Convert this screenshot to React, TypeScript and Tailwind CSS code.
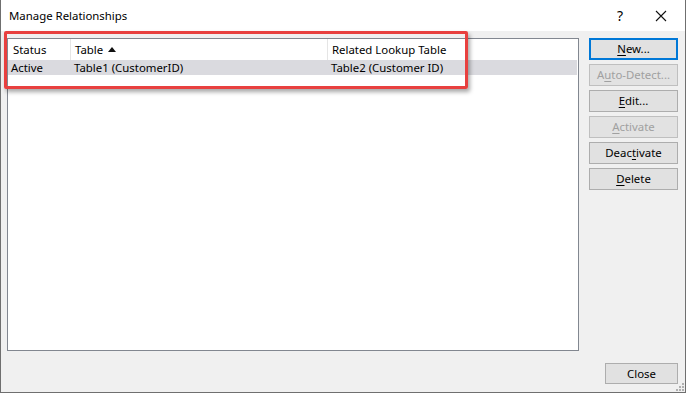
const FONT = "font-['Noto_Sans','Liberation_Sans',sans-serif]";

type Btn = { pre: string; key: string; post: string; disabled?: boolean; focused?: boolean };

const BUTTONS: Btn[] = [
  { pre: "", key: "N", post: "ew...", focused: true },
  { pre: "A", key: "u", post: "to-Detect...", disabled: true },
  { pre: "", key: "E", post: "dit..." },
  { pre: "", key: "A", post: "ctivate", disabled: true },
  { pre: "Deac", key: "t", post: "ivate" },
  { pre: "", key: "D", post: "elete" },
];

function DialogButton({ b }: { b: Btn }) {
  const border = b.focused
    ? "border-2 border-[#0078d7]"
    : b.disabled
      ? "border border-[#bfbfbf]"
      : "border border-[#adadad]";
  return (
    <button
      className={`w-[89px] h-[22px] flex items-center justify-center text-[11.4px] leading-none ${border} ${
        b.disabled ? "bg-[#cccccc]/40 text-[#a0a0a0]" : "bg-[#e1e1e1] text-black"
      }`}
    >
      {b.pre}
      <span className="underline underline-offset-2">{b.key}</span>
      {b.post}
    </button>
  );
}

export default function App() {
  return (
    <div
      className={`${FONT} w-[686px] h-[393px] bg-[#f0f0f0] border-l border-r border-b border-[#6f6f6f] flex flex-col relative overflow-hidden text-black`}
    >
      {/* title bar */}
      <div className="h-[31px] bg-white flex items-center shrink-0">
        <span className="pl-[8px] text-[11.4px] flex-1">Manage Relationships</span>
        <span className="text-[14px] w-[20px] text-center mr-[25px]">?</span>
        <svg width="12" height="12" viewBox="0 0 12 12" className="mr-[18px]">
          <path d="M1 1 L11 11 M11 1 L1 11" stroke="#111" strokeWidth="1.1" />
        </svg>
      </div>

      {/* body */}
      <div className="flex flex-1 pl-[6px] pt-[7px]">
        <div className="w-[572px] h-[313px] bg-white border border-[#828790] flex flex-col text-[11.4px]">
          <div className="h-[21px] flex items-stretch">
            <div className="w-[63px] flex items-center pl-[5px] border-r border-[#e5e5e5]">Status</div>
            <div className="w-[257px] flex items-center pl-[4px] gap-[5px] border-r border-[#e5e5e5]">
              Table
              <svg width="8" height="5" viewBox="0 0 8 5">
                <path d="M0 5 L4 0 L8 5 Z" fill="#111" />
              </svg>
            </div>
            <div className="flex items-center pl-[4px] flex-1">Related Lookup Table</div>
          </div>
          <div className="h-[15px] mr-[1px] bg-[#dadadf] flex items-center">
            <div className="w-[63px] pl-[3px]">Active</div>
            <div className="w-[257px] pl-[3px]">Table1 (CustomerID)</div>
            <div className="pl-[3px]">Table2 (Customer ID)</div>
          </div>
        </div>

        <div className="ml-[10px] flex flex-col gap-[4px]">
          {BUTTONS.map((b) => (
            <DialogButton key={b.pre + b.key + b.post} b={b} />
          ))}
        </div>
      </div>

      <div className="flex justify-end pr-[7px] pb-[8px]">
        <button className="w-[73px] h-[21px] border border-[#adadad] bg-[#e1e1e1] text-[11.4px] leading-none">
          Close
        </button>
      </div>

      {/* size grip */}
      <svg width="8" height="8" viewBox="0 0 8 8" className="absolute right-[1px] bottom-[1px]">
        {[
          [6, 0],
          [6, 3],
          [3, 3],
          [6, 6],
          [3, 6],
          [0, 6],
        ].map(([x, y]) => (
          <rect key={`${x}-${y}`} x={x} y={y} width="2" height="2" fill="#b0b0b0" />
        ))}
      </svg>

      {/* annotation */}
      <div className="absolute left-[3px] top-[31px] w-[464px] h-[58px] border-[3px] border-[#e8403f] rounded-[2px] shadow-[2px_3px_4px_rgba(0,0,0,0.35)]" />
    </div>
  );
}
